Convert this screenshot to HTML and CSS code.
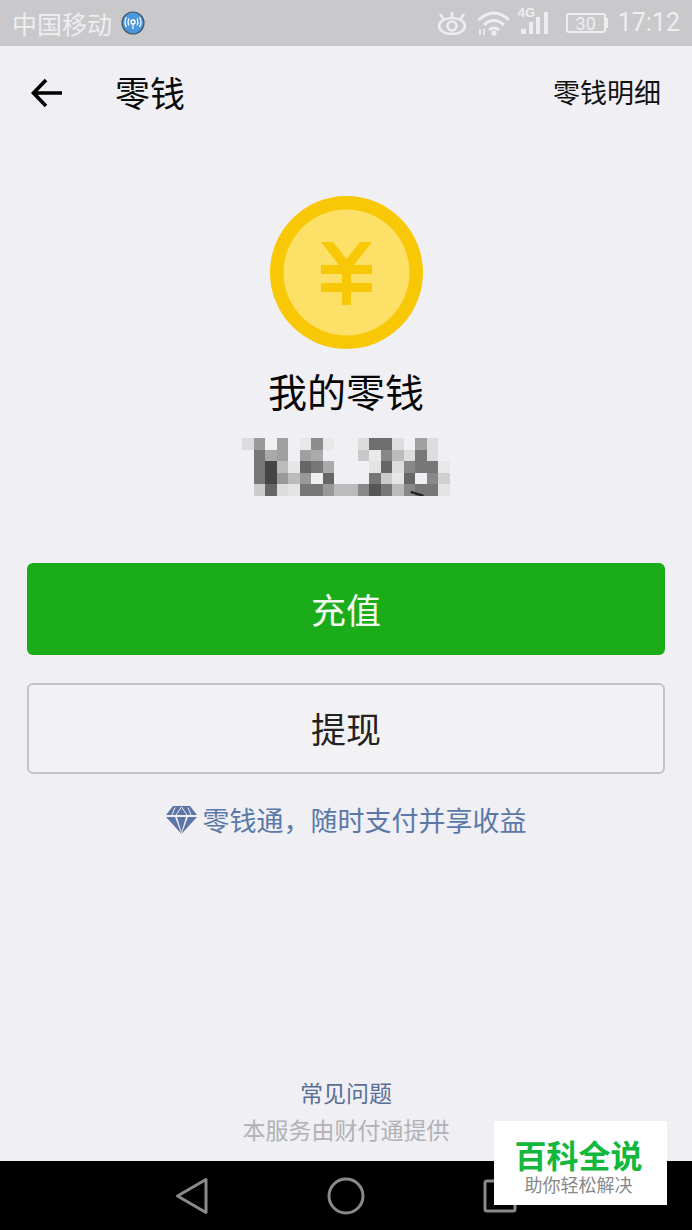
FILE: index.html
```html
<!DOCTYPE html>
<html>
	<head>
		<meta charset="UTF-8">
		<title>零钱</title>
		<link rel="stylesheet" href="styles.css">
	</head>
	<body>
		<div id="page">
			<div class="status">
				<span class="carrier">中国移动</span>
				<svg class="badge" width="24" height="24" viewBox="0 0 24 24">
					<circle cx="12" cy="12" r="11" fill="#4a97dc" stroke="#44586c" stroke-width="1.2"/>
					<circle cx="12" cy="11" r="2" fill="none" stroke="#fff" stroke-width="1.4"/>
					<path d="M12 13v5M8 7.500q-2 3.500 0 7M16 7.500q2 3.500 0 7M5.500 6q-3 5 0 10M18.500 6q3 5 0 10" fill="none" stroke="#fff" stroke-width="1.2"/>
				</svg>
				<div class="status-right">
					<svg class="eye" width="30" height="24" viewBox="0 0 30 24" fill="none" stroke="#eeeef0" stroke-width="2.400">
						<ellipse cx="15" cy="15" rx="13" ry="8"/>
						<circle cx="15" cy="15" r="4.500"/>
						<path d="M3 3l3.500 5M15 1v5M27 3l-3.500 5"/>
					</svg>
					<svg class="wifi" width="33" height="26" viewBox="0 0 33 26" fill="none" stroke="#eeeef0" stroke-width="3">
						<path d="M1.500 10Q17-4 32 10M7 15q9.500-9 20 0M12 20q4.500-4 10 0"/>
						<circle cx="17" cy="23" r="2.600" fill="#eeeef0" stroke="none"/>
						<path d="M3 19v6M7 19v6" stroke-width="1.600"/>
					</svg>
					<div class="signal">
						<span class="net">4G</span>
						<svg width="30" height="28" viewBox="0 0 30 28" fill="#eeeef0">
							<rect x="3" y="20" width="5" height="5"/>
							<rect x="11" y="13" width="4" height="12"/>
							<rect x="18" y="8" width="4" height="17"/>
							<rect x="26" y="3" width="4" height="22"/>
						</svg>
					</div>
					<div class="battery"><span>30</span></div>
					<span class="clock">17:12</span>
				</div>
			</div>

			<div class="header">
				<svg class="back" width="32" height="30" viewBox="0 0 32 30" fill="none" stroke="#000" stroke-width="3.600">
					<path d="M31 15H3M15 2L2.500 15L15 28"/>
				</svg>
				<span class="title">零钱</span>
				<a class="detail">零钱明细</a>
			</div>

			<div class="content">
				<svg class="coin" width="153" height="153" viewBox="0 0 153 153">
					<circle cx="76.500" cy="76.500" r="76.500" fill="#f8c807"/>
					<circle cx="76.500" cy="76.500" r="63" fill="#fde068"/>
					<path d="M51 46h12l13.500 17L90 46h12L84 69h18v9H81v9h21v9H81v13h-9V96H51v-9h21v-9H51v-9h18z" fill="#f8c807"/>
				</svg>
				<div class="mine">我的零钱</div>
				<svg class="amount" width="208" height="58" viewBox="0 0 18 5">
					<g shape-rendering="crispEdges">
						<rect x="0" y="0" width="1" height="1" fill="#dcdcde"/>
						<rect x="1" y="0" width="1" height="1" fill="#999"/>
						<rect x="3" y="0" width="1" height="1" fill="#a0a0a0"/>
						<rect x="5" y="0" width="1" height="1" fill="#e8e8ea"/>
						<rect x="6" y="0" width="1" height="1" fill="#8c8c8c"/>
						<rect x="7" y="0" width="1" height="1" fill="#e8e8ea"/>
						<rect x="10" y="0" width="1" height="1" fill="#dcdcdc"/>
						<rect x="11" y="0" width="2" height="1" fill="#6e6e6e"/>
						<rect x="13" y="0" width="1" height="1" fill="#dedede"/>
						<rect x="15" y="0" width="1" height="1" fill="#a0a0a0"/>
						<rect x="16" y="0" width="1" height="1" fill="#dcdcdc"/>
						<rect x="1" y="1" width="1" height="1" fill="#777"/>
						<rect x="2" y="1" width="1" height="1" fill="#aaa"/>
						<rect x="3" y="1" width="1" height="1" fill="#a0a0a0"/>
						<rect x="5" y="1" width="1" height="1" fill="#a0a0a0"/>
						<rect x="6" y="1" width="1" height="1" fill="#aaa"/>
						<rect x="10" y="1" width="1" height="1" fill="#c8c8c8"/>
						<rect x="11" y="1" width="1" height="1" fill="#eaeaea"/>
						<rect x="12" y="1" width="1" height="1" fill="#888"/>
						<rect x="13" y="1" width="1" height="1" fill="#bbb"/>
						<rect x="14" y="1" width="1" height="1" fill="#ddd"/>
						<rect x="15" y="1" width="1" height="1" fill="#777"/>
						<rect x="16" y="1" width="1" height="1" fill="#ddd"/>
						<rect x="1" y="2" width="1" height="1" fill="#777"/>
						<rect x="2" y="2" width="1" height="1" fill="#444"/>
						<rect x="3" y="2" width="1" height="1" fill="#bbb"/>
						<rect x="4" y="2" width="1" height="1" fill="#e6e6e8"/>
						<rect x="5" y="2" width="1" height="1" fill="#666"/>
						<rect x="6" y="2" width="1" height="1" fill="#777"/>
						<rect x="7" y="2" width="1" height="1" fill="#aaa"/>
						<rect x="11" y="2" width="1" height="1" fill="#e4e4e4"/>
						<rect x="12" y="2" width="1" height="1" fill="#666"/>
						<rect x="13" y="2" width="1" height="1" fill="#ddd"/>
						<rect x="14" y="2" width="1" height="1" fill="#888"/>
						<rect x="15" y="2" width="2" height="1" fill="#777"/>
						<rect x="17" y="2" width="1" height="1" fill="#e8e8ea"/>
						<rect x="1" y="3" width="1" height="1" fill="#777"/>
						<rect x="2" y="3" width="1" height="1" fill="#444"/>
						<rect x="3" y="3" width="1" height="1" fill="#999"/>
						<rect x="4" y="3" width="1" height="1" fill="#bbb"/>
						<rect x="5" y="3" width="1" height="1" fill="#999"/>
						<rect x="7" y="3" width="1" height="1" fill="#666"/>
						<rect x="11" y="3" width="1" height="1" fill="#777"/>
						<rect x="12" y="3" width="1" height="1" fill="#ccc"/>
						<rect x="13" y="3" width="1" height="1" fill="#e6e6e8"/>
						<rect x="14" y="3" width="1" height="1" fill="#666"/>
						<rect x="16" y="3" width="1" height="1" fill="#888"/>
						<rect x="17" y="3" width="1" height="1" fill="#d0d0d0"/>
						<rect x="1" y="4" width="1" height="1" fill="#ccc"/>
						<rect x="2" y="4" width="1" height="1" fill="#666"/>
						<rect x="3" y="4" width="1" height="1" fill="#ddd"/>
						<rect x="4" y="4" width="1" height="1" fill="#e4e4e6"/>
						<rect x="5" y="4" width="2" height="1" fill="#777"/>
						<rect x="7" y="4" width="1" height="1" fill="#999"/>
						<rect x="8" y="4" width="2" height="1" fill="#bbb"/>
						<rect x="10" y="4" width="1" height="1" fill="#888"/>
						<rect x="11" y="4" width="1" height="1" fill="#555"/>
						<rect x="12" y="4" width="1" height="1" fill="#777"/>
						<rect x="13" y="4" width="1" height="1" fill="#bbb"/>
						<rect x="14" y="4" width="1" height="1" fill="#888"/>
						<rect x="15" y="4" width="2" height="1" fill="#777"/>
						<rect x="17" y="4" width="1" height="1" fill="#e4e4e6"/>
					</g>
					<path d="M14.600 4.660L15.700 5" stroke="#222" stroke-width="0.200"/>
				</svg>
				<div class="btn btn-green">充值</div>
				<div class="btn btn-plain">提现</div>
				<div class="promo">
					<svg width="31" height="28" viewBox="0 0 31 28" fill="#5b75a5">
						<path d="M7 0h17l7 9H0z"/>
						<path d="M0 11h9l6.500 17zM31 11h-9l-6.500 17zM11 11h9l-4.500 15z"/>
						<path d="M9 1.500L6 9M22 1.500L25 9M15.500 1L10 9M15.500 1L21 9" fill="none" stroke="#efeff4" stroke-width="1"/>
					</svg>
					<span>零钱通，随时支付并享收益</span>
				</div>
			</div>

			<div class="footer">
				<a class="faq">常见问题</a>
				<div class="provider">本服务由财付通提供</div>
			</div>

			<div class="nav">
				<svg width="34" height="38" viewBox="0 0 34 38" fill="none" stroke="#8a8a8a" stroke-width="3" stroke-linejoin="round">
					<path d="M31 2.500L2.500 19L31 35.500z"/>
				</svg>
				<svg width="38" height="38" viewBox="0 0 38 38" fill="none" stroke="#8a8a8a" stroke-width="3">
					<circle cx="19" cy="19" r="17"/>
				</svg>
				<svg width="34" height="34" viewBox="0 0 34 34" fill="none" stroke="#8a8a8a" stroke-width="3" stroke-linejoin="round">
					<rect x="2" y="2" width="30" height="30" rx="2"/>
				</svg>
			</div>

			<div class="mark">
				<div class="mark-name">百科全说</div>
				<div class="mark-sub">助你轻松解决</div>
			</div>
		</div>
	</body>
</html>
```

FILE: styles.css
```css
* {
	margin: 0;
	padding: 0;
	box-sizing: border-box;
}
html, body {
	height: 100%;
}
body {
	font-family: "Noto Sans CJK SC", "Liberation Sans", sans-serif;
	background-color: #efeff4;
	overflow: hidden;
}
#page {
	position: relative;
	display: flex;
	flex-direction: column;
	width: 692px;
	height: 1230px;
}
.status {
	display: flex;
	align-items: center;
	height: 46px;
	padding: 0 12px;
	background-color: #c9c9cc;
	color: #eeeef0;
}
.carrier {
	font-size: 25px;
	line-height: 46px;
}
.badge {
	margin-left: 9px;
}
.status-right {
	display: flex;
	align-items: center;
	margin-left: auto;
}
.eye {
	margin-right: 10px;
}
.wifi {
	margin-right: 8px;
}
.signal {
	position: relative;
	width: 30px;
	height: 28px;
	margin-right: 18px;
}
.signal svg {
	display: block;
}
.net {
	position: absolute;
	left: 0;
	top: -2px;
	font-family: "Liberation Sans", sans-serif;
	font-size: 13px;
	font-weight: bold;
	line-height: 12px;
}
.battery {
	position: relative;
	display: flex;
	align-items: center;
	justify-content: center;
	width: 40px;
	height: 20px;
	margin-right: 2px;
	border: 2px solid #eeeef0;
	border-radius: 3px;
	font-family: "Roboto", sans-serif;
	font-size: 18px;
}
.battery::after {
	content: "";
	position: absolute;
	right: -4px;
	top: 3px;
	width: 2px;
	height: 10px;
	background-color: #eeeef0;
}
.clock {
	margin-left: 10px;
	font-family: "Roboto", sans-serif;
	font-size: 25px;
	line-height: 46px;
}
.header {
	display: flex;
	align-items: center;
	height: 94px;
	padding: 0 31px;
}
.title {
	margin: 0 0 4px 52px;
	font-size: 35px;
	color: #0a0a0a;
}
.detail {
	margin: 0 0 4px auto;
	font-size: 27px;
	color: #111;
}
.content {
	display: flex;
	flex-direction: column;
	align-items: center;
	padding: 0 27px;
}
.coin {
	display: block;
	margin-top: 56px;
}
.mine {
	margin-top: 16px;
	font-size: 39px;
	line-height: 50px;
	color: #050505;
}
.amount {
	display: block;
	margin-top: 23px;
	filter: blur(0.5px);
}
.btn {
	width: 100%;
	font-size: 35px;
	text-align: center;
	border-radius: 6px;
}
.btn-green {
	height: 92px;
	margin-top: 67px;
	background-color: #1aad19;
	color: #f4fbf4;
	line-height: 92px;
}
.btn-plain {
	height: 91px;
	margin-top: 28px;
	background-color: #f2f2f4;
	border: 2px solid #c4c4c6;
	color: #222;
	line-height: 86px;
}
.promo {
	display: flex;
	align-items: center;
	gap: 6px;
	margin-top: 26px;
	font-size: 27px;
	line-height: 40px;
	color: #5a78a8;
}
.footer {
	margin-top: auto;
	padding-bottom: 13px;
	text-align: center;
	font-size: 23px;
	line-height: 37px;
}
.faq {
	display: block;
	color: #5b6f96;
}
.provider {
	color: #b2b2b4;
}
.nav {
	display: flex;
	align-items: center;
	gap: 118px;
	height: 69px;
	padding-left: 175px;
	background-color: #000;
}
.mark {
	position: absolute;
	left: 494px;
	top: 1121px;
	width: 173px;
	height: 84px;
	padding: 15px 4px 0 0;
	background-color: #fff;
	text-align: center;
}
.mark-name {
	font-size: 32px;
	font-weight: bold;
	line-height: 36px;
	color: #12b83c;
}
.mark-sub {
	font-size: 18px;
	line-height: 24px;
	color: #888;
}
```
